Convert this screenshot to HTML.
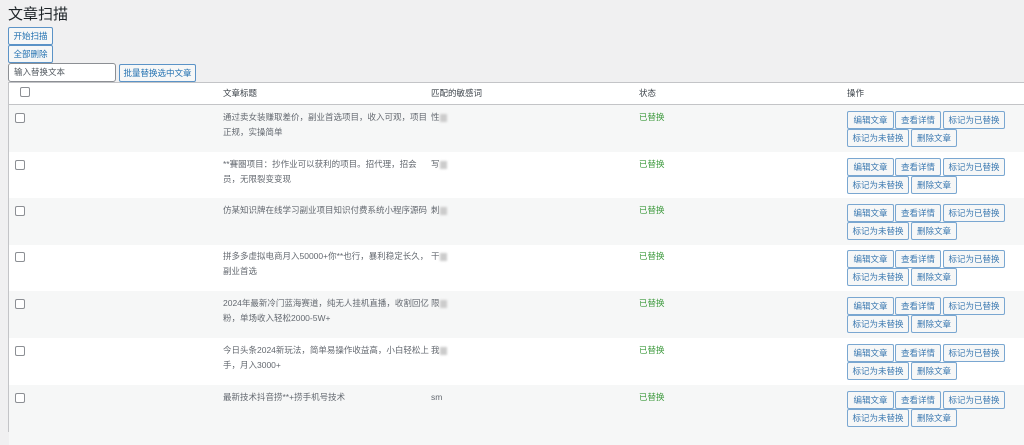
<!DOCTYPE html>
<html><head><meta charset="utf-8"><style>
*{box-sizing:border-box;margin:0;padding:0}
body{width:1024px;height:428px;overflow:hidden;background:#f0f0f1;font-family:"Liberation Sans","Noto Sans CJK SC",sans-serif;color:#3c434a;font-size:8.5px;position:relative}
.abs{position:absolute}
h1{position:absolute;left:8px;top:6px;font-size:15px;font-weight:400;color:#1d2327;line-height:18px}
.btn{position:absolute;height:18px;border:1px solid #5b93c7;border-radius:2px;background:#f6f7f7;color:#2271b1;font-size:8.5px;line-height:16px;text-align:center;white-space:nowrap}
.tb{position:absolute;left:8px;top:82px;width:1020px;height:350px;background:#fff;border:1px solid #c3c4c7}
.row{position:absolute;left:0;width:100%;height:47px}
.g{background:#f6f7f7}
.cb{position:absolute;width:10px;height:10px;border:1px solid #8c8f94;border-radius:2px;background:#fff}
.row .cb{left:6px;top:8px}
.t{position:absolute;left:214px;top:5px;width:208px;line-height:15px;color:#646970}
.k{position:absolute;left:422px;top:5px;line-height:15px;color:#646970}
.k i{display:inline-block;width:7px;height:8px;background:#ccc;filter:blur(1px);vertical-align:middle}
.s{position:absolute;left:630px;top:5px;line-height:15px;color:#3d9a3d}
.b{position:absolute;height:18px;border:1px solid #7aa7d1;border-radius:2px;background:#f6f7f7;color:#3a78b0;line-height:16px;text-align:center;font-size:8.5px;white-space:nowrap}
.b1{left:838px;top:6px;width:47px}
.b2{left:886px;top:6px;width:46px}
.b3{left:934px;top:6px;width:62px}
.b4{left:838px;top:24px;width:62px}
.b5{left:902px;top:24px;width:46px}
</style></head><body>
<h1>文章扫描</h1>
<div class="btn" style="left:8px;top:27px;width:45px">开始扫描</div>
<div class="btn" style="left:8px;top:45px;width:45px">全部删除</div>
<div class="abs" style="left:8px;top:63px;width:108px;height:19px;border:1px solid #8c8f94;border-radius:3px;background:#fff;color:#50575e;line-height:17px;padding-left:5px">输入替换文本</div>
<div class="btn" style="left:119px;top:64px;width:77px">批量替换选中文章</div>
<div class="tb">
<div class="row" style="top:0;height:22px;border-bottom:1px solid #c3c4c7">
<div class="cb" style="left:11px;top:4px"></div>
<div class="t" style="top:3px;color:#3c434a">文章标题</div><div class="k" style="top:3px;color:#3c434a">匹配的敏感词</div><div class="s" style="top:3px;color:#3c434a">状态</div><div class="k" style="left:838px;top:3px;color:#3c434a">操作</div>
</div>

<div class="row g" style="top:22px"><div class="cb"></div><div class="t">通过卖女装赚取差价，副业首选项目，收入可观，项目正规，实操简单</div><div class="k">性<i></i></div><div class="s">已替换</div><div class="b b1">编辑文章</div><div class="b b2">查看详情</div><div class="b b3">标记为已替换</div><div class="b b4">标记为未替换</div><div class="b b5">删除文章</div></div>

<div class="row" style="top:69px"><div class="cb"></div><div class="t" style="width:200px">**賽圏项目：抄作业可以获利的项目。招代理，招会员，无限裂变变现</div><div class="k">写<i></i></div><div class="s">已替换</div><div class="b b1">编辑文章</div><div class="b b2">查看详情</div><div class="b b3">标记为已替换</div><div class="b b4">标记为未替换</div><div class="b b5">删除文章</div></div>

<div class="row g" style="top:115px"><div class="cb"></div><div class="t" style="width:215px">仿某知识牌在线学习副业项目知识付费系统小程序源码</div><div class="k">刺<i></i></div><div class="s">已替换</div><div class="b b1">编辑文章</div><div class="b b2">查看详情</div><div class="b b3">标记为已替换</div><div class="b b4">标记为未替换</div><div class="b b5">删除文章</div></div>

<div class="row" style="top:161px"><div class="cb"></div><div class="t">拼多多虚拟电商月入50000+你**也行，暴利稳定长久，副业首选</div><div class="k">干<i></i></div><div class="s">已替换</div><div class="b b1">编辑文章</div><div class="b b2">查看详情</div><div class="b b3">标记为已替换</div><div class="b b4">标记为未替换</div><div class="b b5">删除文章</div></div>

<div class="row g" style="top:208px"><div class="cb"></div><div class="t">2024年最新冷门蓝海赛道，纯无人挂机直播，收割回亿粉，单场收入轻松2000-5W+</div><div class="k">限<i></i></div><div class="s">已替换</div><div class="b b1">编辑文章</div><div class="b b2">查看详情</div><div class="b b3">标记为已替换</div><div class="b b4">标记为未替换</div><div class="b b5">删除文章</div></div>

<div class="row" style="top:255px"><div class="cb"></div><div class="t">今日头条2024新玩法，简单易操作收益高，小白轻松上手，月入3000+</div><div class="k">我<i></i></div><div class="s">已替换</div><div class="b b1">编辑文章</div><div class="b b2">查看详情</div><div class="b b3">标记为已替换</div><div class="b b4">标记为未替换</div><div class="b b5">删除文章</div></div>

<div class="row g" style="top:302px;height:60px"><div class="cb"></div><div class="t">最新技术抖音捞**+捞手机号技术</div><div class="k">sm</div><div class="s">已替换</div><div class="b b1">编辑文章</div><div class="b b2">查看详情</div><div class="b b3">标记为已替换</div><div class="b b4">标记为未替换</div><div class="b b5">删除文章</div></div>
</div>
</body></html>
